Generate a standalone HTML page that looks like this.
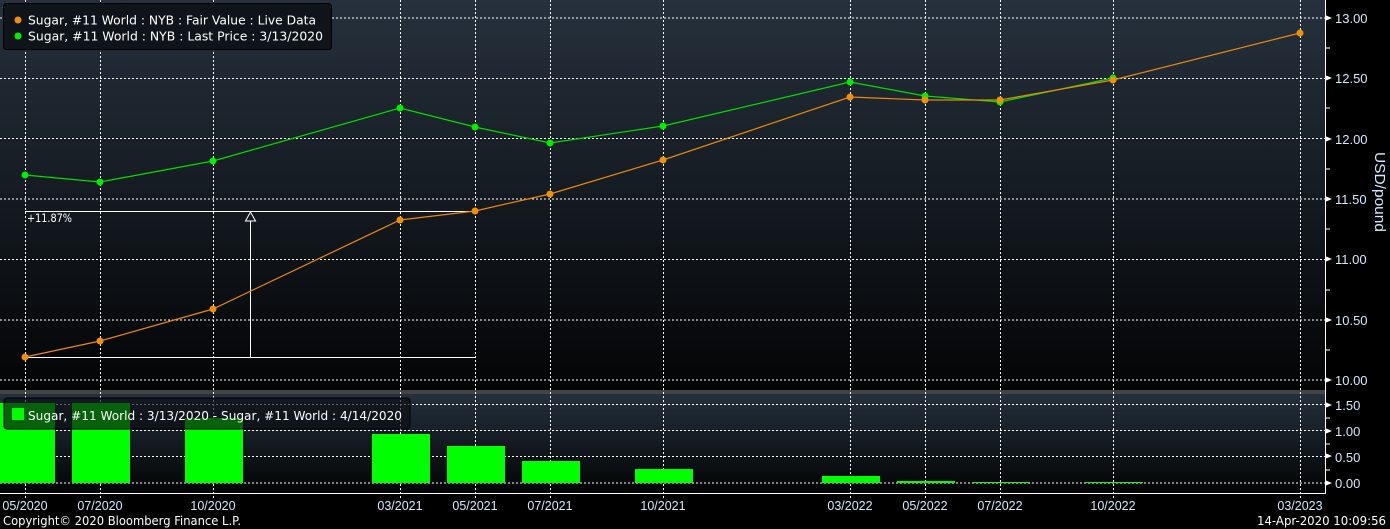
<!DOCTYPE html>
<html><head><meta charset="utf-8"><style>
html,body{margin:0;padding:0;background:#000;}
svg{display:block;font-family:"DejaVu Sans","Liberation Sans",sans-serif;}
</style></head><body>
<svg width="1390" height="529" viewBox="0 0 1390 529" xmlns="http://www.w3.org/2000/svg">
<defs>
<linearGradient id="g1" x1="0" y1="0" x2="0" y2="1"><stop offset="0" stop-color="#26313d"/><stop offset="1" stop-color="#030405"/></linearGradient>
<linearGradient id="g2" x1="0" y1="0" x2="0" y2="1"><stop offset="0" stop-color="#24303c"/><stop offset="1" stop-color="#030405"/></linearGradient>
</defs>
<rect width="1390" height="529" fill="#000"/>
<rect x="0" y="0" width="1325" height="390" fill="url(#g1)"/>
<rect x="0" y="390" width="1325" height="4" fill="#444"/>
<rect x="0" y="394" width="1325" height="99" fill="url(#g2)"/>
<g stroke="#fff" stroke-width="1" stroke-dasharray="2,2">
<line x1="0" y1="18" x2="1325" y2="18"/><line x1="0" y1="78.5" x2="1325" y2="78.5"/><line x1="0" y1="138.5" x2="1325" y2="138.5"/><line x1="0" y1="199" x2="1325" y2="199"/><line x1="0" y1="259.5" x2="1325" y2="259.5"/><line x1="0" y1="320" x2="1325" y2="320"/><line x1="0" y1="380" x2="1325" y2="380"/>
<line x1="0" y1="404.5" x2="1325" y2="404.5"/><line x1="0" y1="430.5" x2="1325" y2="430.5"/><line x1="0" y1="456.5" x2="1325" y2="456.5"/><line x1="0" y1="483" x2="1325" y2="483"/>
<g>
<line x1="25.5" y1="0" x2="25.5" y2="500"/><line x1="100.5" y1="0" x2="100.5" y2="500"/><line x1="213.5" y1="0" x2="213.5" y2="500"/><line x1="400.5" y1="0" x2="400.5" y2="500"/><line x1="475.5" y1="0" x2="475.5" y2="500"/><line x1="550.5" y1="0" x2="550.5" y2="500"/><line x1="663.5" y1="0" x2="663.5" y2="500"/><line x1="850.5" y1="0" x2="850.5" y2="500"/><line x1="925.5" y1="0" x2="925.5" y2="500"/><line x1="1000.5" y1="0" x2="1000.5" y2="500"/><line x1="1113.5" y1="0" x2="1113.5" y2="500"/><line x1="1300.5" y1="0" x2="1300.5" y2="500"/>
</g></g>
<g fill="#00ff00">
<rect x="0" y="403" width="55" height="80"/><rect x="72" y="403" width="58" height="80"/><rect x="185" y="418" width="58" height="65"/><rect x="372" y="434" width="58" height="49"/><rect x="447" y="446" width="58" height="37"/><rect x="522" y="461" width="58" height="22"/><rect x="635" y="469" width="58" height="14"/><rect x="822" y="476" width="58" height="7"/><rect x="897" y="481" width="58" height="2"/><rect x="972" y="482" width="58" height="1"/><rect x="1085" y="482" width="58" height="1"/>
</g>
<rect x="4" y="398" width="406" height="31" rx="3" fill="rgba(10,14,18,0.65)" stroke="#000"/>
<rect x="12" y="408" width="12" height="12" fill="#00ff00"/>
<text x="28" y="420" fill="#fff" font-size="12" textLength="374" lengthAdjust="spacingAndGlyphs">Sugar, #11 World : 3/13/2020 - Sugar, #11 World : 4/14/2020</text>
<line x1="0" y1="493.5" x2="1325" y2="493.5" stroke="#fff"/>
<line x1="1325.5" y1="0" x2="1325.5" y2="494" stroke="#fff"/>
<g stroke="#fff"><line x1="1325" y1="48" x2="1330" y2="48"/><line x1="1325" y1="108" x2="1330" y2="108"/><line x1="1325" y1="169" x2="1330" y2="169"/><line x1="1325" y1="229" x2="1330" y2="229"/><line x1="1325" y1="290" x2="1330" y2="290"/><line x1="1325" y1="350" x2="1330" y2="350"/><line x1="1325" y1="418" x2="1330" y2="418"/><line x1="1325" y1="444" x2="1330" y2="444"/><line x1="1325" y1="470" x2="1330" y2="470"/></g>
<g fill="#fff">
<path d="M1325 15l7 3-7 3z"/><path d="M1325 75l7 3-7 3z"/><path d="M1325 136l7 3-7 3z"/><path d="M1325 196l7 3-7 3z"/><path d="M1325 256l7 3-7 3z"/><path d="M1325 317l7 3-7 3z"/><path d="M1325 377l7 3-7 3z"/><path d="M1325 402l7 3-7 3z"/><path d="M1325 428l7 3-7 3z"/><path d="M1325 453l7 3-7 3z"/><path d="M1325 480l7 3-7 3z"/>
</g>
<g fill="#d6e8ff" font-size="13" font-family="Liberation Sans, sans-serif">
<text x="1335" y="23">13.00</text><text x="1335" y="83">12.50</text><text x="1335" y="144">12.00</text><text x="1335" y="204">11.50</text><text x="1335" y="264">11.00</text><text x="1335" y="325">10.50</text><text x="1335" y="385">10.00</text>
<text x="1335" y="410">1.50</text><text x="1335" y="436">1.00</text><text x="1335" y="462">0.50</text><text x="1335" y="488">0.00</text>
</g>
<text transform="translate(1375,192) rotate(90)" text-anchor="middle" fill="#d6e8ff" font-size="15" font-family="Liberation Sans, sans-serif" textLength="80" lengthAdjust="spacingAndGlyphs">USD/pound</text>
<g fill="#d6e8ff" font-size="12.5" text-anchor="middle" font-family="Liberation Sans, sans-serif">
<text x="25" y="510">05/2020</text><text x="100" y="510">07/2020</text><text x="213" y="510">10/2020</text><text x="400" y="510">03/2021</text><text x="475" y="510">05/2021</text><text x="550" y="510">07/2021</text><text x="663" y="510">10/2021</text><text x="850" y="510">03/2022</text><text x="925" y="510">05/2022</text><text x="1000" y="510">07/2022</text><text x="1113" y="510">10/2022</text><text x="1300" y="510">03/2023</text>
</g>
<text x="3" y="525" fill="#fff" font-size="12" textLength="238" lengthAdjust="spacingAndGlyphs">Copyright© 2020 Bloomberg Finance L.P.</text>
<text x="1257" y="525" fill="#fff" font-size="12" textLength="129" lengthAdjust="spacingAndGlyphs">14-Apr-2020 10:09:56</text>
<g stroke="#fff" fill="none">
<line x1="25" y1="211.5" x2="476" y2="211.5"/><line x1="25" y1="357.5" x2="476" y2="357.5"/><line x1="250.5" y1="357" x2="250.5" y2="221"/><path d="M245.5 221 L250.5 212 L255.5 221 Z"/>
</g>
<text x="27" y="222" fill="#fff" font-size="11.5" textLength="45" lengthAdjust="spacingAndGlyphs">+11.87%</text>
<polyline fill="none" stroke="#00dd00" stroke-width="1.2" points="25,175 100,182 213,161 400,108 475,127 550,143 663,126 850,82 925,96 1000,102 1113,78"/>
<polyline fill="none" stroke="#e8890a" stroke-width="1.2" points="25,357 100,341 213,309 400,220 475,211 550,194 663,160 850,97 925,100 1000,100 1113,80 1300,33"/>
<g fill="#00ee00"><circle cx="25" cy="175" r="3.5"/><circle cx="100" cy="182" r="3.5"/><circle cx="213" cy="161" r="3.5"/><circle cx="400" cy="108" r="3.5"/><circle cx="475" cy="127" r="3.5"/><circle cx="550" cy="143" r="3.5"/><circle cx="663" cy="126" r="3.5"/><circle cx="850" cy="82" r="3.5"/><circle cx="925" cy="96" r="3.5"/><circle cx="1000" cy="102" r="3.5"/><circle cx="1113" cy="78" r="3.5"/></g>
<g fill="#f0900a"><circle cx="25" cy="357" r="3.5"/><circle cx="100" cy="341" r="3.5"/><circle cx="213" cy="309" r="3.5"/><circle cx="400" cy="220" r="3.5"/><circle cx="475" cy="211" r="3.5"/><circle cx="550" cy="194" r="3.5"/><circle cx="663" cy="160" r="3.5"/><circle cx="850" cy="97" r="3.5"/><circle cx="925" cy="100" r="3.5"/><circle cx="1000" cy="100" r="3.5"/><circle cx="1113" cy="80" r="3.5"/><circle cx="1300" cy="33" r="3.5"/></g>
<rect x="3.5" y="3.5" width="328" height="46" rx="3" fill="#0e1419" stroke="#000"/>
<circle cx="18" cy="20" r="3.5" fill="#f0900a"/><circle cx="18" cy="36" r="3.5" fill="#00ee00"/>
<text x="28" y="24.5" fill="#fff" font-size="12" textLength="288" lengthAdjust="spacingAndGlyphs">Sugar, #11 World : NYB : Fair Value : Live Data</text>
<text x="28" y="40.5" fill="#fff" font-size="12" textLength="295" lengthAdjust="spacingAndGlyphs">Sugar, #11 World : NYB : Last Price : 3/13/2020</text>
</svg>
</body></html>
